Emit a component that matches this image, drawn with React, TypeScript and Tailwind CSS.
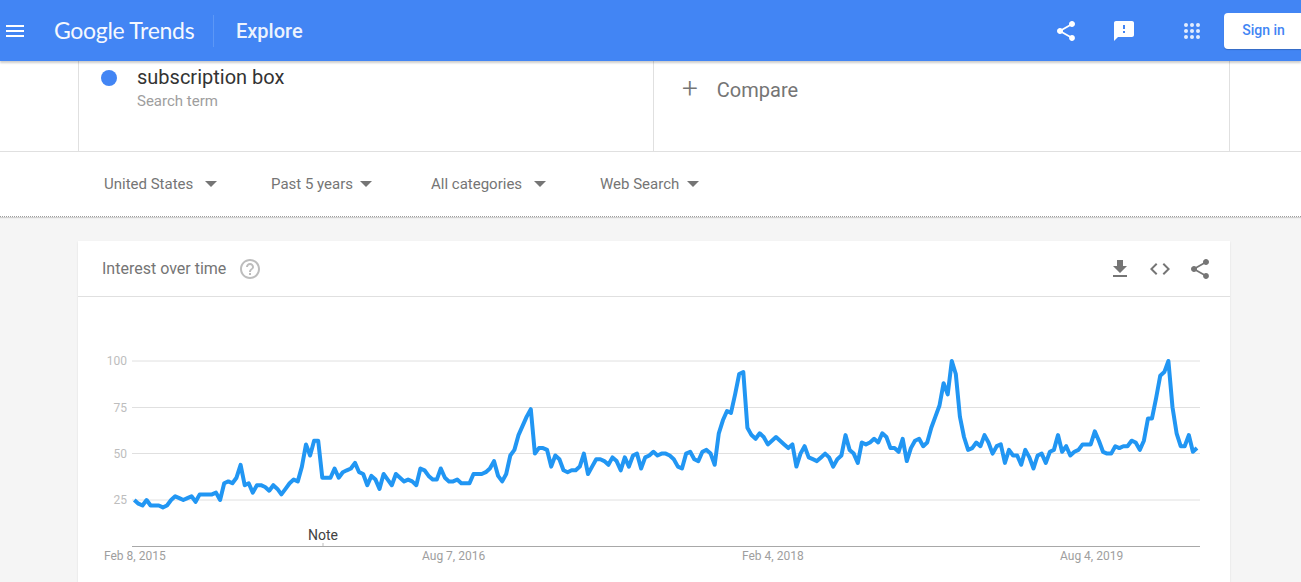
import React from 'react';

const values = [
  25, 23, 22, 25, 22, 22, 22, 21, 22, 25, 27, 26, 25, 26, 27, 24, 28, 28, 28, 28, 29, 25, 34, 35, 34, 37, 44, 33, 34, 29,
  33, 33, 32, 30, 33, 31, 28, 31, 34, 36, 35, 43, 55, 49, 57, 57, 37, 37, 37, 42, 37, 40, 41, 42, 45, 40, 39, 33, 38, 36,
  31, 39, 36, 33, 39, 37, 35, 36, 35, 33, 42, 41, 38, 36, 36, 42, 37, 35, 35, 36, 34, 34, 34, 39, 39, 39, 40, 42, 46, 38,
  35, 39, 49, 52, 60, 65, 70, 74, 50, 53, 53, 52, 43, 49, 47, 41, 40, 41, 41, 43, 50, 39, 43, 47, 47, 46, 44, 48, 46, 41,
  48, 43, 49, 50, 42, 48, 49, 51, 49, 50, 50, 49, 47, 43, 42, 50, 51, 47, 46, 51, 52, 50, 44, 61, 68, 73, 72, 82, 93, 94,
  64, 60, 58, 61, 59, 55, 57, 59, 57, 55, 53, 55, 43, 50, 54, 48, 47, 46, 48, 50, 48, 43, 47, 49, 60, 52, 50, 45, 56, 55,
  56, 58, 56, 61, 59, 53, 53, 51, 58, 46, 53, 57, 58, 54, 56, 64, 70, 76, 88, 82, 100, 93, 70, 59, 52, 53, 56, 54, 60, 56,
  50, 54, 55, 45, 52, 49, 49, 44, 52, 48, 42, 49, 50, 45, 51, 52, 60, 51, 54, 49, 51, 52, 55, 55, 55, 62, 57, 51, 50, 50,
  54, 53, 54, 54, 57, 56, 52, 57, 69, 69, 80, 92, 94, 100, 75, 61, 54, 54, 60, 51, 53,
];

const startX = 134.3;
const endX = 1197;
const points = values
  .map((v, i) => {
    const x = startX + (i * (endX - startX)) / (values.length - 1);
    const y = 546.3 - v * 1.853;
    return `${x.toFixed(1)},${y.toFixed(1)}`;
  })
  .join(' ');

const Icon = ({ d, className }: { d: string; className: string }) => (
  <svg viewBox="0 0 24 24" className={className} fill="currentColor">
    <path d={d} />
  </svg>
);

const shareD =
  'M18 16.08c-.76 0-1.44.3-1.96.77L8.91 12.7c.05-.23.09-.46.09-.7s-.04-.47-.09-.7l7.05-4.11c.54.5 1.25.81 2.04.81 1.66 0 3-1.34 3-3s-1.34-3-3-3-3 1.34-3 3c0 .24.04.47.09.7L8.04 9.81C7.5 9.31 6.79 9 6 9c-1.66 0-3 1.34-3 3s1.34 3 3 3c.79 0 1.5-.31 2.04-.81l7.12 4.16c-.05.21-.08.43-.08.65 0 1.61 1.31 2.92 2.92 2.92 1.61 0 2.92-1.31 2.92-2.92s-1.31-2.92-2.92-2.92z';

const Caret = () => <span className="inline-block w-0 h-0 border-x-[6px] border-x-transparent border-t-[6px] border-t-[#757575]" />;

const filters = [
  { label: 'United States', width: 'w-[167px]', gap: 'gap-[12px]' },
  { label: 'Past 5 years', width: 'w-[160px]', gap: 'gap-[7px]' },
  { label: 'All categories', width: 'w-[169px]', gap: 'gap-[12px]' },
  { label: 'Web Search', width: 'w-[110px]', gap: 'gap-[8px]' },
];

const grid = [
  { y: 361, label: '100' },
  { y: 407.5, label: '75' },
  { y: 453.5, label: '50' },
  { y: 500, label: '25' },
];

const dates = [
  { x: 104, label: 'Feb 8, 2015' },
  { x: 422, label: 'Aug 7, 2016' },
  { x: 742, label: 'Feb 4, 2018' },
  { x: 1060, label: 'Aug 4, 2019' },
];

export default function App() {
  return (
    <div className="h-[582px] overflow-hidden bg-[#f5f5f5] font-['Roboto',sans-serif]">
      <header className="relative z-10 flex h-[61px] items-center bg-[#4285f4] text-white shadow-[0_2px_2px_rgba(0,0,0,0.2)]">
        <Icon
          d="M3 18h18v-2H3v2zm0-5h18v-2H3v2zm0-7v2h18V6H3z"
          className="ml-[3px] h-6 w-6"
        />
        <span className="ml-[27px] w-[159px] font-['Lato',sans-serif] text-[23px] tracking-[-0.3px] opacity-95">Google Trends</span>
        <span className="h-8 w-px bg-[#5c97f6]" />
        <span className="ml-[22px] text-[20px] font-medium opacity-90">Explore</span>
        <div className="ml-auto flex items-center">
          <Icon d={shareD} className="h-6 w-6" />
          <Icon
            d="M20 2H4c-1.1 0-1.99.9-1.99 2L2 22l4-4h14c1.1 0 2-.9 2-2V4c0-1.1-.9-2-2-2zm-7 12h-2v-2h2v2zm0-4h-2V6h2v4z"
            className="ml-[34px] h-6 w-6"
          />
          <svg viewBox="0 0 18 18" className="ml-[47px] h-[18px] w-[18px]" fill="#e3edfd">
            {[3, 9, 15].map((cy) =>
              [3, 9, 15].map((cx) => <circle key={`${cx}-${cy}`} cx={cx} cy={cy} r="2" />),
            )}
          </svg>
          <button className="ml-[23px] h-[36px] w-[77px] rounded-l-[4px] bg-white pl-[2px] text-[14px] font-medium text-[#4285f4] shadow-[0_1px_1px_rgba(0,0,0,0.2)]">
            Sign in
          </button>
        </div>
      </header>

      <div className="flex h-[91px] border-b border-[#e0e0e0] bg-white">
        <div className="ml-[78px] flex w-[576px] border-x border-[#e0e0e0]">
          <span className="ml-[22px] mt-[9px] h-4 w-4 rounded-full bg-[#4285f4]" />
          <div className="ml-5 mt-[1px]">
            <div className="text-[20px] leading-[30px] text-[#333333]">subscription box</div>
            <div className="text-[15px] leading-[18px] text-[#9e9e9e]">Search term</div>
          </div>
        </div>
        <div className="flex w-[576px] items-start border-r border-[#e0e0e0] pt-[14px]">
          <span className="ml-[28px] text-[28px] font-light leading-[28px] text-[#757575]">+</span>
          <span className="ml-[19px] text-[20px] leading-[30px] text-[#757575]">Compare</span>
        </div>
      </div>

      <div className="flex h-[65px] items-center border-b border-dotted border-[#9e9e9e] bg-white pl-[104px] shadow-[0_1px_1px_rgba(0,0,0,0.15)]">
        {filters.map((f) => (
          <div key={f.label} className={`flex items-center ${f.gap} ${f.width} text-[15px] text-[#757575]`}>
            <span>{f.label}</span>
            <Caret />
          </div>
        ))}
      </div>

      <section className="ml-[78px] mt-6 w-[1152px] bg-white shadow-[0_1px_2px_rgba(0,0,0,0.1)]">
        <div className="flex h-[56px] items-center border-b border-[#e0e0e0] pl-[24px] pr-[18px]">
          <span className="text-[16px] text-[#757575]">Interest over time</span>
          <Icon
            d="M11 18h2v-2h-2v2zm1-16C6.48 2 2 6.48 2 12s4.48 10 10 10 10-4.48 10-10S17.52 2 12 2zm0 18c-4.41 0-8-3.59-8-8s3.59-8 8-8 8 3.59 8 8-3.59 8-8 8zm0-14c-2.21 0-4 1.79-4 4h2c0-1.1.9-2 2-2s2 .9 2 2c0 2-3 1.75-3 5h2c0-2.25 3-2.5 3-5 0-2.21-1.79-4-4-4z"
            className="ml-[12px] h-6 w-6 text-[#bdbdbd]"
          />
          <div className="ml-auto flex items-center gap-4 text-[#757575]">
            <Icon d="M19 9h-4V3H9v6H5l7 7 7-7zM5 18v2h14v-2H5z" className="h-6 w-6" />
            <Icon
              d="M9.4 16.6L4.8 12l4.6-4.6L8 6l-6 6 6 6 1.4-1.4zm5.2 0l4.6-4.6-4.6-4.6L16 6l6 6-6 6-1.4-1.4z"
              className="h-6 w-6"
            />
            <Icon d={shareD} className="h-6 w-6" />
          </div>
        </div>
        <svg viewBox="78 297 1152 285" className="block h-[285px] w-[1152px] font-['Roboto',sans-serif]">
          {grid.map((g) => (
            <g key={g.label}>
              <line x1="132" x2="1200" y1={g.y} y2={g.y} stroke="#e0e0e0" strokeWidth="1" />
              <text x="127" y={g.y + 4} textAnchor="end" fontSize="12" fill="#bdbdbd">
                {g.label}
              </text>
            </g>
          ))}
          <line x1="132" x2="1200" y1="546.5" y2="546.5" stroke="#a8a8a8" strokeWidth="1" />
          <line x1="323" x2="323" y1="543" y2="546" stroke="#bdbdbd" strokeWidth="1" />
          <polyline points={points} fill="none" stroke="#2196f3" strokeWidth="4" strokeLinejoin="round" />
          <text x="308" y="540" fontSize="14" fill="#424242">
            Note
          </text>
          {dates.map((d) => (
            <text key={d.label} x={d.x} y="560" fontSize="12" fill="#9e9e9e">
              {d.label}
            </text>
          ))}
        </svg>
      </section>
    </div>
  );
}
